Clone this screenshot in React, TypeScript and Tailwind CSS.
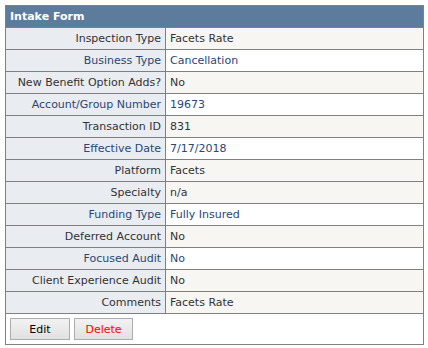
import React from "react";

type Row = { label: string; value: string; alt: boolean };

const rows: Row[] = [
  { label: "Inspection Type", value: "Facets Rate", alt: false },
  { label: "Business Type", value: "Cancellation", alt: true },
  { label: "New Benefit Option Adds?", value: "No", alt: false },
  { label: "Account/Group Number", value: "19673", alt: true },
  { label: "Transaction ID", value: "831", alt: false },
  { label: "Effective Date", value: "7/17/2018", alt: true },
  { label: "Platform", value: "Facets", alt: false },
  { label: "Specialty", value: "n/a", alt: false },
  { label: "Funding Type", value: "Fully Insured", alt: true },
  { label: "Deferred Account", value: "No", alt: false },
  { label: "Focused Audit", value: "No", alt: true },
  { label: "Client Experience Audit", value: "No", alt: false },
  { label: "Comments", value: "Facets Rate", alt: false },
];

export default function App() {
  return (
    <div
      className="w-[428px] h-[348px] bg-white pt-[5px] pl-[5px]"
      style={{ fontFamily: '"DejaVu Sans", Verdana, sans-serif' }}
    >
      <div className="w-[419px] border border-[#808080] text-[11px] leading-[13px]">
        <div className="h-[22px] border-b border-[#808080] bg-[#5D7B9D] flex items-center pl-[4px] text-white font-bold">
          Intake Form
        </div>
        {rows.map((r) => (
          <div
            key={r.label}
            className={
              "h-[22px] border-b border-[#808080] flex " +
              (r.alt ? "text-[#284775] bg-white" : "text-[#333333] bg-[#F7F6F3]")
            }
          >
            <div className="w-[160px] shrink-0 border-r border-[#808080] bg-[#E9ECF1] flex items-center justify-end pr-[4px]">
              {r.label}
            </div>
            <div className="flex-1 flex items-center pl-[4px]">{r.value}</div>
          </div>
        ))}
        <div className="h-[30px] flex items-center gap-[4px] px-[4px] bg-white">
          <button className="w-[60px] h-[22px] border border-[#adadad] bg-gradient-to-b from-[#f2f2f2] to-[#e1e1e1] text-black text-[11px] flex items-center justify-center">
            Edit
          </button>
          <button className="w-[59px] h-[22px] border border-[#adadad] bg-gradient-to-b from-[#f2f2f2] to-[#e1e1e1] text-[#ff0000] text-[11px] flex items-center justify-center">
            Delete
          </button>
        </div>
      </div>
    </div>
  );
}
